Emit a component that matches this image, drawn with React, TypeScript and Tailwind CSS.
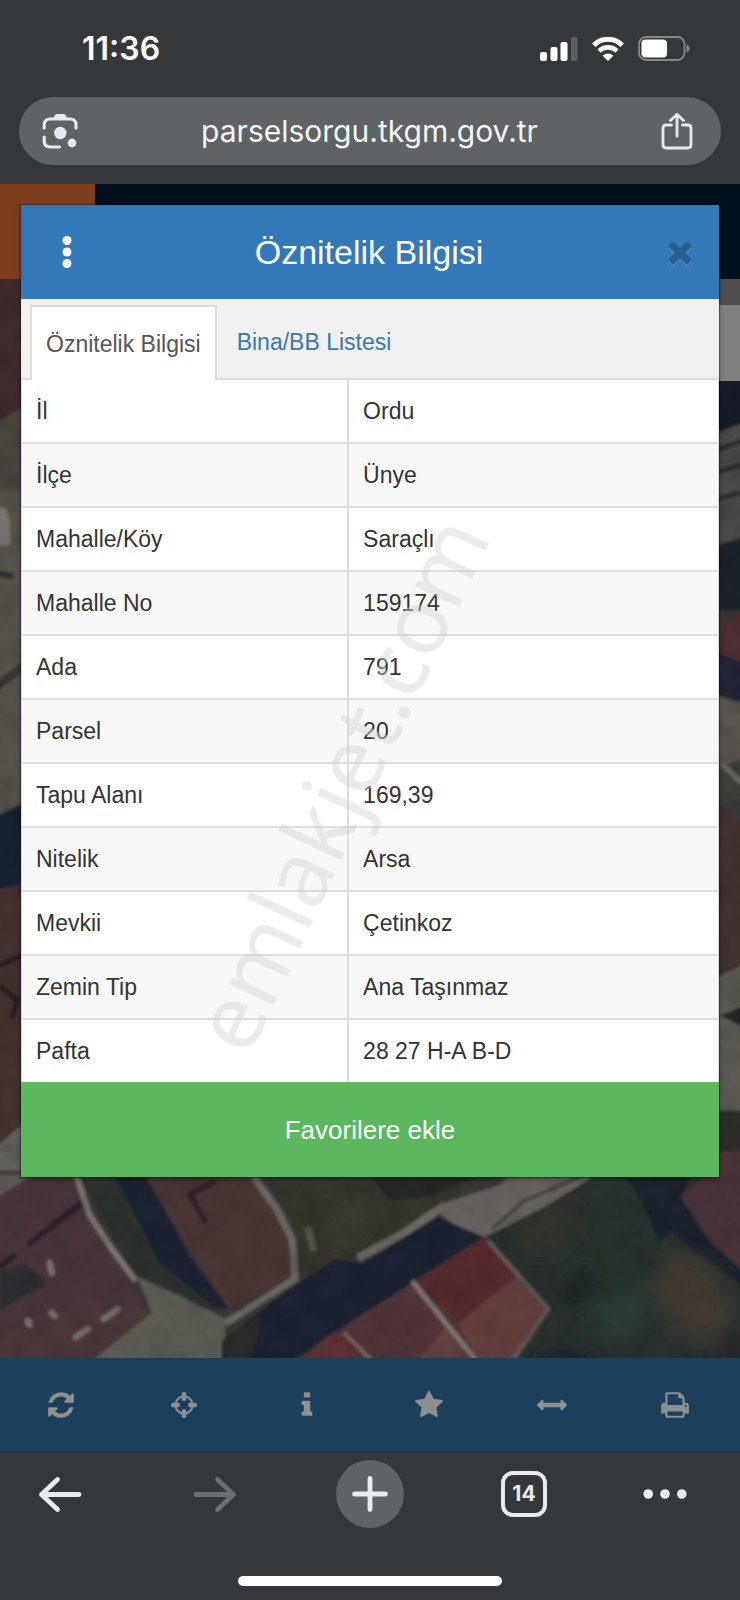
import React from "react";

const rows: [string, string][] = [
  ["İl", "Ordu"],
  ["İlçe", "Ünye"],
  ["Mahalle/Köy", "Saraçlı"],
  ["Mahalle No", "159174"],
  ["Ada", "791"],
  ["Parsel", "20"],
  ["Tapu Alanı", "169,39"],
  ["Nitelik", "Arsa"],
  ["Mevkii", "Çetinkoz"],
  ["Zemin Tip", "Ana Taşınmaz"],
  ["Pafta", "28 27 H-A B-D"],
];

const tools: { label: string; box: string; path: string }[] = [
  {
    label: "Yenile",
    box: "-128 -128 1792 1792",
    path: "M1511 928q0 5-1 7-64 268-268 434.500T764 1536q-146 0-282.500-55T238 1324l-129 129q-19 19-45 19t-45-19-19-45V960q0-26 19-45t45-19h448q26 0 45 19t19 45-19 45l-137 137q71 66 161 102t187 36q134 0 250-65t186-179q11-17 53-117 8-23 30-23h192q13 0 22.500 9.500t9.500 22.500zm25-800v448q0 26-19 45t-45 19h-448q-26 0-45-19t-19-45 19-45l138-138Q969 256 768 256q-134 0-250 65T332 500q-11 17-53 117-8 23-30 23H50q-13 0-22.500-9.500T18 608v-7q65-268 270-434.500T768 0q146 0 284 55.500T1297 212l130-129q19-19 45-19t45 19 19 45z",
  },
  {
    label: "Konum",
    box: "0 0 1792 1792",
    path: "M1325 1024h-109q-26 0-45-19t-19-45V832q0-26 19-45t45-19h109q-32-108-112.500-188.500T1024 467v109q0 26-19 45t-45 19H832q-26 0-45-19t-19-45V467q-108 32-188.500 112.500T467 768h109q26 0 45 19t19 45v128q0 26-19 45t-45 19H467q32 108 112.500 188.500T768 1325v-109q0-26 19-45t45-19h128q26 0 45 19t19 45v109q108-32 188.500-112.500T1325 1024zm339-192v128q0 26-19 45t-45 19h-143q-37 161-154.500 278.500T1024 1457v143q0 26-19 45t-45 19H832q-26 0-45-19t-19-45v-143q-161-37-278.500-154.500T335 1024H192q-26 0-45-19t-19-45V832q0-26 19-45t45-19h143q37-161 154.500-278.500T768 335V192q0-26 19-45t45-19h128q26 0 45 19t19 45v143q161 37 278.500 154.500T1457 768h143q26 0 45 19t19 45z",
  },
  {
    label: "Bilgi",
    box: "0 0 1792 1792",
    path: "M1216 1344v128q0 26-19 45t-45 19H640q-26 0-45-19t-19-45v-128q0-26 19-45t45-19h64V896h-64q-26 0-45-19t-19-45V704q0-26 19-45t45-19h384q26 0 45 19t19 45v576h64q26 0 45 19t19 45zM1088 192v192q0 26-19 45t-45 19H768q-26 0-45-19t-19-45V192q0-26 19-45t45-19h256q26 0 45 19t19 45z",
  },
  {
    label: "Favoriler",
    box: "0 0 1792 1792",
    path: "M1728 647q0 22-26 48l-363 354 86 500q1 7 1 20 0 21-10.500 35.500T1385 1619q-19 0-40-12l-449-236-449 236q-22 12-40 12-21 0-31.500-14.500T365 1569q0-6 2-20l86-500L89 695q-25-27-25-48 0-37 56-46l502-73L847 73q19-41 49-41t49 41l225 455 502 73q56 9 56 46z",
  },
  {
    label: "Ölçüm",
    box: "0 0 1792 1792",
    path: "M1792 896q0 26-19 45l-256 256q-19 19-45 19t-45-19-19-45v-128H384v128q0 26-19 45t-45 19-45-19L19 941Q0 922 0 896t19-45l256-256q19-19 45-19t45 19 19 45v128h1024V640q0-26 19-45t45-19 45 19l256 256q19 19 19 45z",
  },
  {
    label: "Yazdır",
    box: "0 0 1792 1792",
    path: "M448 1536h896v-256H448v256zm0-640h896V512h-160q-40 0-68-28t-28-68V256H448v640zm1152 64q0-26-19-45t-45-19-45 19-19 45 19 45 45 19 45-19 19-45zm128 0v416q0 13-9.500 22.500t-22.500 9.500h-224v160q0 40-28 68t-68 28H416q-40 0-68-28t-28-68v-160H96q-13 0-22.500-9.500T64 1376V960q0-79 56.500-135.500T256 768h64V224q0-40 28-68t68-28h672q40 0 88 20t76 48l152 152q28 28 48 76t20 88v256h64q79 0 135.500 56.500T1728 960z",
  },
];

const closePath =
  "M1490 1322q0 40-28 68l-136 136q-28 28-68 28t-68-28l-294-294-294 294q-28 28-68 28t-68-28l-136-136q-28-28-28-68t28-68l294-294-294-294q-28-28-28-68t28-68l136-136q28-28 68-28t68 28l294 294 294-294q28-28 68-28t68 28l136 136q28 28 28 68t-28 68l-294 294 294 294q28 28 28 68z";

function AerialMap() {
  return (
    <svg
      className="block h-full w-full"
      viewBox="0 279 740 1078"
      preserveAspectRatio="xMidYMax slice"
      aria-hidden="true"
    >
      <defs>
        <filter id="soft" x="0" y="0" width="100%" height="100%">
          <feGaussianBlur stdDeviation="1.6" />
        </filter>
        <filter id="softer" x="-20%" y="-20%" width="140%" height="140%">
          <feGaussianBlur stdDeviation="9" />
        </filter>
        <filter id="grain" x="0" y="0" width="100%" height="100%">
          <feTurbulence type="fractalNoise" baseFrequency="0.04" numOctaves="3" seed="7" />
          <feColorMatrix values="0 0 0 0 0  0 0 0 0 0  0 0 0 0 0  1.6 0 0 0 -0.6" />
        </filter>
      </defs>
      <rect x="0" y="279" width="740" height="1078" fill="#3a3837" />
      <g filter="url(#soft)">
        {/* west edge */}
        <path d="M-9 270H40V405L-9 425Z" fill="#41292e" />
        <path d="M-9 425L40 398V500H-9Z" fill="#4b4440" />
        <path d="M-9 490H40V820H-9Z" fill="#55534c" />
        <path d="M-9 508H6Q12 520 11 545H-9Z" fill="#77736f" />
        <path d="M-9 572L14 576" stroke="#2e2f2f" strokeWidth="6" />
        <path d="M-9 690L30 662" stroke="#3a3433" strokeWidth="9" />
        <path d="M-9 818L40 795V884L-9 890Z" fill="#192030" />
        <path d="M-9 890L40 880V1120L-9 1160Z" fill="#43302f" />
        <path d="M-9 968L30 952M0 985L18 1000L12 1018" stroke="#261f24" strokeWidth="5" fill="none" />
        <path d="M-9 1150L40 1110V1165L-9 1180Z" fill="#615e5a" />
        {/* east edge */}
        <path d="M700 270H750V425L700 440Z" fill="#171a26" />
        <path d="M700 440L750 420V535L700 550Z" fill="#4b4a47" />
        <path d="M710 452L750 438M710 474L750 462M712 500L750 490" stroke="#2b2b30" strokeWidth="5" />
        <path d="M700 550L750 535V610H700Z" fill="#1e212b" />
        <path d="M700 640L750 606V665L700 650Z" fill="#4e2d31" />
        <path d="M700 645L750 665V705H700Z" fill="#202637" />
        <path d="M700 690L750 705V758L700 775Z" fill="#5a5750" />
        <path d="M700 775L750 755V800H700Z" fill="#3f403b" />
        <path d="M722 764L750 790" stroke="#6c6964" strokeWidth="5" />
        <path d="M700 785L750 830V965L700 985Z" fill="#40312f" />
        <path d="M700 985L750 960V1110L700 1130Z" fill="#5c5a52" />
        <path d="M720 1015L750 1002V1030Z" fill="#242628" />
        <path d="M700 1110H750V1160H700Z" fill="#2d2f2b" />
        {/* west roofs and yard */}
        <path d="M-9 1170H80V1200L134 1278L150 1312L95 1366H-9Z" fill="#46353a" />
        <path d="M-9 1174H34L-9 1200Z" fill="#5b5854" />
        <path d="M82 1202L28 1244M16 1254L0 1266" stroke="#29212a" strokeWidth="6" />
        <path d="M0 1270L24 1262L34 1268L48 1285L30 1292L0 1310Z" fill="#2f2e31" />
        <path d="M-9 1366V1345L58 1300L130 1300L150 1312L95 1366Z" fill="#4c373a" />
        <path d="M50 1262L52 1272M28 1320L30 1324M52 1312L55 1315M104 1318L118 1308M76 1336L88 1328" stroke="#76706c" strokeWidth="6" strokeLinecap="round" />
        <path d="M76 1170H120L226 1312L180 1302L134 1276Z" fill="#2d302f" />
        <path d="M112 1170H145L190 1255L230 1308L214 1306L160 1262Z" fill="#1f2232" />
        <path d="M142 1170H255L292 1232V1276L229 1308L188 1246Z" fill="#4b3436" />
        <path d="M216 1180L190 1193L206 1222" stroke="#30212a" strokeWidth="6" fill="none" />
        <path d="M77 1176L90 1214L112 1248L136 1280" stroke="#77736d" strokeWidth="6" fill="none" />
        <path d="M137 1275L180 1295L226 1318L224 1366H84L152 1312Z" fill="#5c5c55" />
        {/* grass and track */}
        <path d="M262 1170H500L440 1205L360 1254L300 1284L296 1232Z" fill="#34362f" />
        <path d="M370 1176H480L430 1196L390 1200Z" fill="#262a27" />
        <path d="M254 1176L277 1208L292 1238L295 1278L226 1322" stroke="#696660" strokeWidth="7" fill="none" />
        <path d="M308 1226L314 1250" stroke="#53544d" strokeWidth="7" />
        <path d="M438 1212L445 1202L500 1184L512 1170H602L545 1206L484 1236L466 1232Z" fill="#68635e" />
        <path d="M580 1176L524 1200L492 1228" stroke="#46453e" strokeWidth="4" fill="none" />
        <path d="M445 1204L405 1232L358 1257" stroke="#6a6861" strokeWidth="8" fill="none" />
        <path d="M437 1216L484 1236L412 1282L330 1336L290 1366H222L222 1340L286 1290L336 1258L362 1262Z" fill="#1d2330" />
        <path d="M224 1338L262 1312L250 1366H226Z" fill="#2a2b29" />
        {/* red roofs */}
        <path d="M484 1236L548 1308L510 1366H286L330 1334L412 1282Z" fill="#513538" />
        <path d="M484 1236L516 1276L460 1322L414 1282Z" fill="#542a2f" />
        <path d="M516 1276L546 1308L508 1366H482L458 1322Z" fill="#633c3d" />
        <path d="M446 1326L480 1366H412Z" fill="#63403f" />
        <path d="M344 1330L366 1366H290Z" fill="#5e3234" />
        <path d="M412 1280L444 1320L480 1364" stroke="#7d7370" strokeWidth="5" fill="none" />
        <path d="M344 1332L372 1360" stroke="#77615f" strokeWidth="4" />
        {/* eastern scrub */}
        <path d="M602 1170H750V1366H512L548 1308L486 1236L545 1206Z" fill="#2a332f" />
        <path d="M488 1240L548 1308L508 1366" stroke="#625854" strokeWidth="4" fill="none" />
        <path d="M622 1170H694L680 1196L708 1240L750 1276V1290L700 1256L672 1230L658 1242L646 1210Z" fill="#1b202e" />
        <path d="M680 1196L704 1176L722 1150H750V1276L712 1242Z" fill="#4a3338" />
      </g>
      <g filter="url(#softer)">
        <path d="M550 1212L578 1204L576 1228L550 1252L524 1250L512 1236Z" fill="#35362f" />
        <path d="M556 1290L588 1256L598 1294L572 1310Z" fill="#1d2627" />
        <path d="M672 1250L700 1256L728 1292V1330L700 1342L672 1326L652 1290Z" fill="#433a35" />
        <path d="M704 1356L750 1326V1366H694Z" fill="#29262a" />
        <path d="M530 1366L556 1345L596 1356L604 1366Z" fill="#1d2327" />
        <circle cx="620" cy="1310" r="24" fill="#2a3c35" />
        <circle cx="345" cy="1220" r="20" fill="#393b31" />
      </g>
      <rect x="0" y="279" width="740" height="1078" filter="url(#grain)" opacity="0.14" />
    </svg>
  );
}

function StatusBar() {
  return (
    <div className="flex h-[97px] items-center justify-between pr-[50px] pl-[82px] text-white">
      <time className="font-['Inter',sans-serif] text-[32px] leading-10 font-semibold">11:36</time>
      <div className="flex items-center gap-[14px]">
        <svg width="38" height="24" viewBox="0 0 38 24" aria-label="Sinyal" role="img">
          <rect x="0" y="15" width="7" height="9" rx="2" fill="#fff" />
          <rect x="10.500" y="10" width="7" height="14" rx="2" fill="#fff" />
          <rect x="20.500" y="5" width="7" height="19" rx="2" fill="#fff" />
          <rect x="31" y="0" width="6.500" height="24" rx="2" fill="#5d6062" />
        </svg>
        <svg width="32" height="24" viewBox="0 0 32 24" aria-label="Wi-Fi" role="img">
          <path d="M1.800 8.200C9.800 .3 22.200 .3 30.200 8.200" fill="none" stroke="#fff" strokeWidth="5" />
          <path d="M7 14C12 9.200 20 9.200 25 14" fill="none" stroke="#fff" strokeWidth="4.600" />
          <path d="M16 24L10.600 18.700Q16 14.200 21.400 18.700Z" fill="#fff" />
        </svg>
        <svg width="52" height="25" viewBox="0 0 52 25" aria-label="Pil" role="img">
          <rect x="1" y="1" width="45.500" height="23" rx="7" fill="none" stroke="#85888a" strokeWidth="1.800" />
          <rect x="3.500" y="3.500" width="25.500" height="18" rx="4" fill="#fff" />
          <path d="M48.500 8.500Q51.500 9.500 51.500 12.500T48.500 16.500Z" fill="#85888a" />
        </svg>
      </div>
    </div>
  );
}

function AddressBar() {
  return (
    <div className="mx-[19px] mb-[19px] flex h-[68px] items-center justify-between rounded-full bg-[#5f6365] pr-[28px] pl-[23px]">
      <button type="button" aria-label="Görsel arama" className="text-[#e6eaee]">
        <svg width="36" height="36" viewBox="0 0 36 36" fill="none" stroke="currentColor" strokeWidth="3.200" strokeLinecap="round">
          <path d="M2.200 15V12Q2.200 6 8.200 6H28Q34 6 34 12V15" />
          <path d="M2.200 24V28Q2.200 34 8.200 34H17.500" />
          <path d="M10.500 6L13 2Q13.600 1 15 1H21.500Q23 1 23.500 2L26 6Z" fill="currentColor" stroke="none" />
          <circle cx="18.300" cy="20" r="6.200" fill="currentColor" stroke="none" />
          <circle cx="30" cy="30" r="4.400" fill="currentColor" stroke="none" />
        </svg>
      </button>
      <span className="font-['Inter',sans-serif] text-[30px] leading-10 text-[#f4f6f8]">parselsorgu.tkgm.gov.tr</span>
      <button type="button" aria-label="Paylaş" className="text-[#e6eaee]">
        <svg width="32" height="38" viewBox="0 0 32 38" fill="none" stroke="currentColor" strokeWidth="2.800" strokeLinecap="round" strokeLinejoin="round">
          <path d="M10.500 13H5Q2 13 2 16V33Q2 36 5 36H27Q30 36 30 33V16Q30 13 27 13H21.500" />
          <path d="M16 24V2.500M9.500 8.500L16 2.300L22.500 8.500" />
        </svg>
      </button>
    </div>
  );
}

function ParcelDialog() {
  return (
    <section
      aria-label="Öznitelik Bilgisi"
      className="relative mx-[21px] mt-[21px] bg-white font-['Liberation_Sans',Arial,sans-serif] text-[23px] leading-8 text-[#333333] shadow-[0_0_0_1px_rgba(0,0,0,0.25),0_2px_5px_rgba(0,0,0,0.4)]"
    >
      <header className="flex h-[94px] items-center justify-between bg-[#3378b7] pr-[22px] pl-[38px]">
        <button type="button" aria-label="Menü" className="text-white">
          <svg width="16" height="34" viewBox="0 0 16 34" fill="currentColor">
            <circle cx="8" cy="5.500" r="4.500" />
            <circle cx="8" cy="17" r="4.500" />
            <circle cx="8" cy="28.500" r="4.500" />
          </svg>
        </button>
        <h1 className="text-[34px] leading-10 text-white">Öznitelik Bilgisi</h1>
        <button type="button" aria-label="Kapat" className="text-[#285f92]">
          <svg width="34" height="34" viewBox="0 0 1792 1792">
            <path d={closePath} fill="#5f97cb" transform="translate(0 60)" />
            <path d={closePath} fill="currentColor" />
          </svg>
        </button>
      </header>

      <div role="tablist" className="flex h-[81px] items-end border-b-2 border-[#dddddd] bg-[#f0f0f0] pl-[9px]">
        <button
          type="button"
          role="tab"
          aria-selected="true"
          className="-mb-0.5 h-[75px] border-2 border-b-0 border-[#dddddd] bg-white px-3.5 text-[#555555]"
        >
          Öznitelik Bilgisi
        </button>
        <button type="button" role="tab" aria-selected="false" className="h-[73px] px-5 text-[#3878ac]">
          Bina/BB Listesi
        </button>
      </div>

      <table className="w-full table-fixed border-separate border-spacing-0 border-x border-[#dddddd]">
        <tbody>
          {rows.map(([name, value]) => (
            <tr key={name} className="odd:bg-white even:bg-[#f8f8f8]">
              <th scope="row" className="h-16 w-[47%] border-r-2 border-b-2 border-[#dddddd] pl-3.5 text-left font-normal">
                {name}
              </th>
              <td className="h-16 border-b-2 border-[#dddddd] pl-3.5">{value}</td>
            </tr>
          ))}
        </tbody>
      </table>

      <button type="button" className="-mt-0.5 block h-[95px] w-full bg-[#5cb85f] text-[26px] text-white">
        Favorilere ekle
      </button>

      <span
        aria-hidden="true"
        className="pointer-events-none absolute top-[59.5%] left-[45.5%] -translate-x-1/2 -translate-y-1/2 -rotate-65 font-['Noto_Sans',sans-serif] text-[91px] leading-none text-[#d3d3d3]/45"
      >
        emlakjet.com
      </span>
    </section>
  );
}

function BrowserBar() {
  return (
    <nav className="border-t border-[#1c2a38] bg-[#35383a] pb-[14px]">
      <div className="grid h-[82px] grid-cols-[120fr_190fr_120fr_188fr_94fr] items-center justify-items-center pr-7">
        <button type="button" aria-label="Geri" className="text-[#e8ecf0]">
          <svg width="44" height="38" viewBox="0 0 44 38" fill="none" stroke="currentColor" strokeWidth="4.800" strokeLinecap="round" strokeLinejoin="round">
            <path d="M41 19.500H3.500M19.500 4.500L3.500 19.500L19.500 34.500" />
          </svg>
        </button>
        <button type="button" aria-label="İleri" className="text-[#6b6f71]">
          <svg width="44" height="38" viewBox="0 0 44 38" fill="none" stroke="currentColor" strokeWidth="4.800" strokeLinecap="round" strokeLinejoin="round">
            <path d="M3 19.500H40.500M24.500 4.500L40.500 19.500L24.500 34.500" />
          </svg>
        </button>
        <button type="button" aria-label="Yeni sekme" className="flex size-[68px] items-center justify-center rounded-full bg-[#5f6365] text-[#e8ecf0]">
          <svg width="36" height="36" viewBox="0 0 36 36" stroke="currentColor" strokeWidth="4.800" strokeLinecap="round">
            <path d="M18 2.500V33.500M2.500 18H33.500" />
          </svg>
        </button>
        <button
          type="button"
          aria-label="14 sekme"
          className="flex size-[46px] items-center justify-center rounded-xl border-4 border-[#e8ecf0] font-['Inter',sans-serif] text-[21px] leading-6 font-bold text-[#e8ecf0]"
        >
          14
        </button>
        <button type="button" aria-label="Diğer" className="text-[#e8ecf0]">
          <svg width="44" height="10" viewBox="0 0 44 10" fill="currentColor">
            <circle cx="5.200" cy="5" r="4.800" />
            <circle cx="22" cy="5" r="4.800" />
            <circle cx="38.800" cy="5" r="4.800" />
          </svg>
        </button>
      </div>
      <div className="mx-auto mt-[41px] h-2.5 w-[264px] rounded-full bg-white" />
    </nav>
  );
}

export default function App() {
  return (
    <div className="flex min-h-screen flex-col bg-[#35383a]">
      <StatusBar />
      <AddressBar />
      <main className="relative flex-1">
        <div className="absolute inset-0 flex flex-col overflow-hidden">
          <div className="flex h-[95px]">
            <div className="w-[95px] bg-[#7e3d1e]" />
            <div className="flex-1 bg-[#00101d]" />
          </div>
          <div className="relative min-h-0 flex-1">
            <AerialMap />
            <div className="absolute top-0 right-0 w-12">
              <div className="h-[26px] bg-[#504f4e]" />
              <div className="h-[76px] bg-[#7f7f7f]" />
            </div>
          </div>
        </div>
        <ParcelDialog />
      </main>
      <nav className="grid h-[94px] grid-cols-6 items-center justify-items-center bg-[#1c3f5c] pr-1">
        {tools.map((tool) => (
          <button key={tool.label} type="button" aria-label={tool.label} className="text-[#8d8f91]">
            <svg width="30" height="30" viewBox={tool.box} fill="currentColor">
              <path d={tool.path} />
            </svg>
          </button>
        ))}
      </nav>
      <BrowserBar />
    </div>
  );
}
